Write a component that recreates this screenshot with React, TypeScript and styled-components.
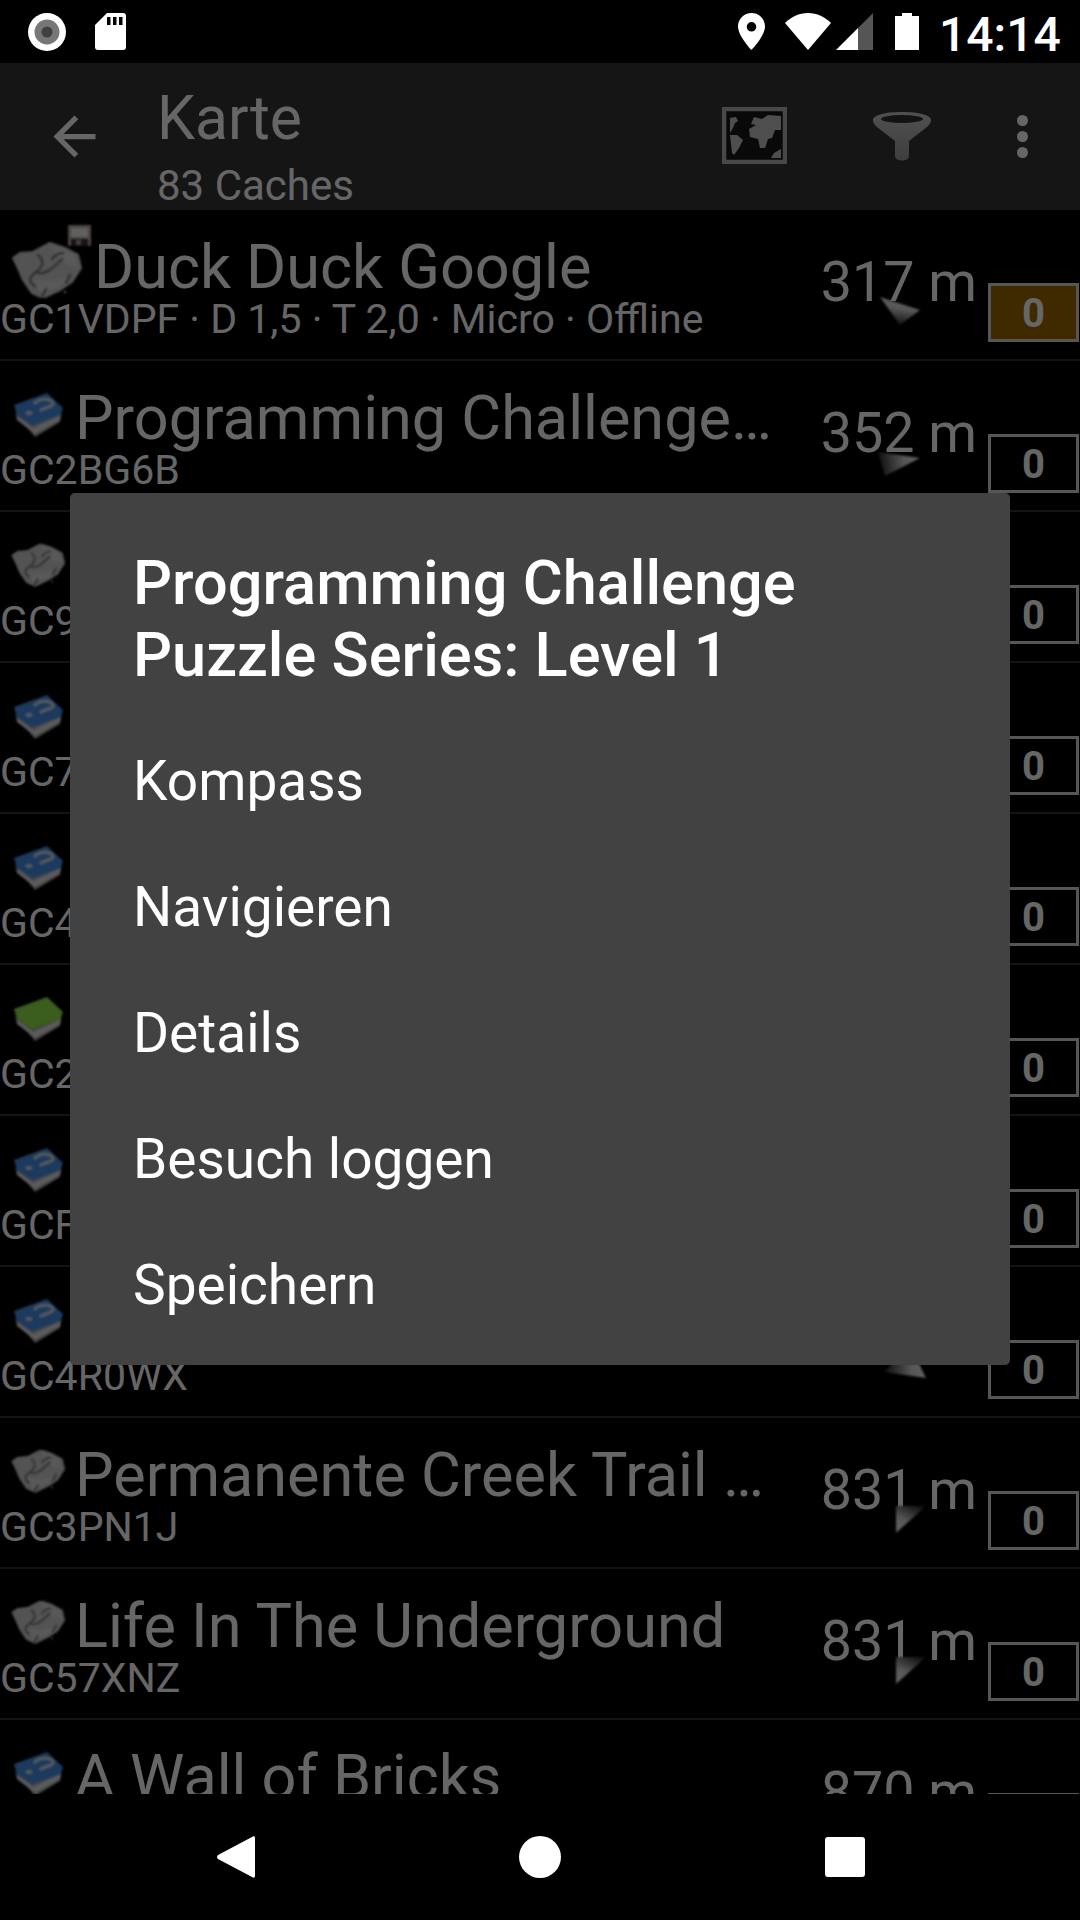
import React from 'react'
import styled, { createGlobalStyle } from 'styled-components'

const GlobalStyle = createGlobalStyle`
  html, body {
    margin: 0;
    padding: 0;
    background: #000;
    font-family: Roboto, "Liberation Sans", sans-serif;
  }
`

const Screen = styled.div`
  width: 1080px;
  height: 1920px;
  display: flex;
  flex-direction: column;
  overflow: hidden;
  background: #000;
`

const StatusBar = styled.div`
  height: 63px;
  flex: none;
  display: flex;
  align-items: center;
  padding: 0 22px 0 28px;
  color: #fff;
`

const StatusLeft = styled.div`
  display: flex;
  align-items: center;
  gap: 29px;
  flex: 1;
`

const StatusRight = styled.div`
  display: flex;
  align-items: center;
`

const StatusIcon = styled.svg<{ $gap?: number }>`
  display: block;
  margin-right: ${({ $gap }) => $gap ?? 0}px;
`

const Clock = styled.span`
  font-size: 48px;
  font-weight: 500;
  line-height: 63px;
  position: relative;
  top: 3px;
  width: 116px;
  margin-left: -3px;
  margin-right: 3px;
  white-space: nowrap;
`

const Dimmed = styled.div`
  position: relative;
  flex: 1;
  min-height: 0;
  display: flex;
  flex-direction: column;
`

const ActionBar = styled.div`
  height: 147px;
  flex: none;
  display: flex;
  background: #363636;
  color: #fff;
`

const BackSlot = styled.div`
  width: 112px;
  padding: 42px 0 0 43px;
  box-sizing: border-box;
  flex: none;
`

const Titles = styled.div`
  flex: 1;
  padding-left: 45px;
`

const BarTitle = styled.div`
  font-size: 60.6px;
  line-height: 68px;
  margin-top: 22px;
  color: #fff;
`

const BarSubtitle = styled.div`
  font-size: 42px;
  line-height: 46px;
  margin-top: 10px;
  color: #fff;
`

const BarActions = styled.div`
  display: flex;
  align-items: flex-start;
  padding-top: 44px;
  padding-right: 52px;
`

const MapSlot = styled.svg`
  display: block;
  margin-right: 86px;
`

const FunnelSlot = styled.svg`
  display: block;
  margin-top: 5px;
  margin-right: 86px;
`

const MoreDots = styled.div`
  display: flex;
  flex-direction: column;
  gap: 5px;
  margin-top: 8px;
`

const Dot = styled.span`
  width: 11px;
  height: 11px;
  border-radius: 50%;
  background: #fff;
`

const List = styled.div`
  flex: 1;
  min-height: 0;
  overflow: hidden;
`

const Row = styled.div`
  position: relative;
  height: 151px;
  box-sizing: border-box;
  border-bottom: 2px solid #333;
  display: flex;
  color: #fff;
`

const RowMain = styled.div`
  flex: 1;
  min-width: 0;
  padding-top: 26px;
`

const TitleLine = styled.div`
  display: flex;
  height: 62px;
`

const IconSlot = styled.div<{ $wide?: boolean }>`
  flex: none;
  width: ${({ $wide }) => ($wide ? 94 : 75)}px;
  margin-top: ${({ $wide }) => ($wide ? -11 : 6)}px;
`

const CacheTitle = styled.div`
  font-size: 61.2px;
  line-height: 60px;
  margin-top: 1px;
  white-space: nowrap;
`

const CacheInfo = styled.div`
  font-size: 41px;
  line-height: 42px;
  white-space: nowrap;
`

const Distance = styled.div`
  flex: none;
  margin-top: 42px;
  margin-right: 11px;
  font-size: 55.6px;
  line-height: 60px;
  white-space: nowrap;
`

const Badge = styled.div<{ $active?: boolean }>`
  flex: none;
  align-self: flex-start;
  width: 91px;
  height: 59px;
  margin: 73px 1px 0 0;
  padding-top: 2px;
  box-sizing: border-box;
  border: 3px solid #d8d8d8;
  background: ${({ $active }) => ($active ? '#9e6a00' : 'transparent')};
  display: flex;
  align-items: center;
  justify-content: center;
  font-size: 40px;
  font-weight: 700;
`

const ArrowBox = styled.svg`
  position: absolute;
  left: 870px;
  top: 70px;
  filter: blur(1px);
`

const Overlay = styled.div`
  position: absolute;
  inset: 0;
  background: rgba(0, 0, 0, 0.6);
  display: flex;
  align-items: center;
  justify-content: center;
`

const Dialog = styled.div`
  width: 940px;
  height: 872px;
  box-sizing: border-box;
  background: #424242;
  border-radius: 5px;
  color: #fff;
  padding: 54px 63px 0;
`

const DialogTitle = styled.div`
  font-size: 61.3px;
  font-weight: 500;
  line-height: 72px;
  margin-bottom: 27px;
`

const DialogItem = styled.div`
  height: 126px;
  font-size: 55px;
  line-height: 126px;
`

const NavBar = styled.div`
  height: 126px;
  flex: none;
  display: flex;
  align-items: center;
  gap: 264px;
  padding-left: 217px;
`

const NavCircle = styled.span`
  width: 42px;
  height: 42px;
  border-radius: 50%;
  background: #fff;
`

const NavSquare = styled.span`
  width: 40px;
  height: 40px;
  border-radius: 3px;
  background: #fff;
`

const SoftSvg = styled.svg`
  display: block;
  filter: blur(0.8px);
`

const rockOutline =
  'M13 33 L20 28 L33 27 L50 18 L65 23 L78 30 L81 43 L72 57 L60 65 L43 73 L32 68 L23 55 L18 43 Z'

const RockShape = () => (
  <>
    <path d={rockOutline} fill="#cfcfcf" stroke="#cfcfcf" strokeLinejoin="round" strokeWidth="2" />
    <path d="M50 20 L66 25 L76 32 L78 42 L68 40 L56 30 Z" fill="#dedede" />
    <path d="M32 55 L40 68 L60 62 L70 52 L50 56 Z" fill="#dedede" />
    <path
      d="M38 30 C45 36 43 42 36 47 C29 52 28 56 35 61 M52 34 C55 30 58 28 63 28 M36 47 C44 52 54 42 62 34 M42 72 L46 64 M66 58 L70 50"
      fill="none"
      stroke="#7c7c7c"
      strokeWidth="2.4"
      strokeLinecap="round"
    />
    <circle cx="65" cy="67" r="1.2" fill="#ddd" />
  </>
)

const RockIcon = () => (
  <SoftSvg width="72" height="50" viewBox="-3 18 94 65.4">
    <RockShape />
  </SoftSvg>
)

const OfflineRockIcon = () => (
  <SoftSvg width="93" height="73" viewBox="0 0 93 73">
    <RockShape />
    <rect x="68" y="0" width="23" height="21" rx="1" fill="#c4a8a8" />
    <rect x="71" y="3" width="17" height="9" fill="#f0f0f0" />
    <rect x="71" y="14" width="17" height="7" fill="#383030" />
    <rect x="76" y="15" width="5" height="5" fill="#b09a9a" />
  </SoftSvg>
)

const BoxIcon = ({ color, question }: { color: string; question?: boolean }) => (
  <SoftSvg width="72" height="50" viewBox="-14 0 72 50">
    <path d="M1 20 L21 44 L46 29 L48 16 Z" fill="#a8a8ac" />
    <path d="M2 22 L19 35 L47 22 L46 27 L21 41 L3 27 Z" fill="#e4e4e4" />
    <path d="M0 12 L33 0 L49 15 L46 22 L18 32 L3 22 Z" fill={color} />
    {question && (
      <>
        <path
          d="M21 10 C26 5 37 5 39 10 C40 14 31 14 27 17"
          fill="none"
          stroke="#d0dae8"
          strokeWidth="3.6"
          strokeLinecap="round"
        />
        <ellipse cx="15" cy="20" rx="3.6" ry="2.2" fill="#d0dae8" />
      </>
    )}
  </SoftSvg>
)

type ArrowShape = { points: string; from: [number, number]; to: [number, number] }

const DirectionArrow = ({ id, shape }: { id: string; shape: ArrowShape }) => (
  <ArrowBox width="66" height="72" viewBox="0 0 66 72">
    <defs>
      <linearGradient
        id={id}
        gradientUnits="userSpaceOnUse"
        x1={shape.from[0]}
        y1={shape.from[1]}
        x2={shape.to[0]}
        y2={shape.to[1]}
      >
        <stop offset="0" stopColor="#222" />
        <stop offset="0.7" stopColor="#d8d8d8" />
        <stop offset="1" stopColor="#e8e8e8" />
      </linearGradient>
    </defs>
    <polygon points={shape.points} fill={`url(#${id})`} />
  </ArrowBox>
)

type Cache = {
  icon: 'rock' | 'offline' | 'mystery' | 'green'
  title?: string
  info: string
  distance?: string
  arrow?: ArrowShape
  active?: boolean
}

const caches: Cache[] = [
  {
    icon: 'offline',
    title: 'Duck Duck Google',
    info: 'GC1VDPF · D 1,5 · T 2,0 · Micro · Offline',
    distance: '317 m',
    active: true,
    arrow: { points: '10,17 50,30 30,45', from: [30, 46], to: [34, 22] },
  },
  {
    icon: 'mystery',
    title: 'Programming Challenge…',
    info: 'GC2BG6B',
    distance: '352 m',
    arrow: { points: '8,21 50,27 15,45', from: [8, 32], to: [46, 28] },
  },
  { icon: 'rock', info: 'GC9' },
  { icon: 'mystery', info: 'GC7' },
  { icon: 'mystery', info: 'GC4' },
  { icon: 'green', info: 'GC2' },
  { icon: 'mystery', info: 'GCF' },
  {
    icon: 'mystery',
    info: 'GC4R0WX',
    arrow: { points: '14,35 56,41 40,8', from: [14, 34], to: [52, 40] },
  },
  {
    icon: 'rock',
    title: 'Permanente Creek Trail …',
    info: 'GC3PN1J',
    distance: '831 m',
    arrow: { points: '26,18 56,18 26,45', from: [42, 14], to: [30, 40] },
  },
  {
    icon: 'rock',
    title: 'Life In The Underground',
    info: 'GC57XNZ',
    distance: '831 m',
    arrow: { points: '26,18 56,18 26,45', from: [42, 14], to: [30, 40] },
  },
  {
    icon: 'mystery',
    title: 'A Wall of Bricks',
    info: 'GC3WALL',
    distance: '870 m',
  },
]

const CacheIcon = ({ kind }: { kind: Cache['icon'] }) => {
  if (kind === 'offline') return <OfflineRockIcon />
  if (kind === 'rock') return <RockIcon />
  if (kind === 'green') return <BoxIcon color="#94e84c" />
  return <BoxIcon color="#4690ec" question />
}

const menuItems = ['Kompass', 'Navigieren', 'Details', 'Besuch loggen', 'Speichern']

const App = () => (
  <Screen>
    <GlobalStyle />
    <StatusBar>
      <StatusLeft>
        <svg width="38" height="38" viewBox="0 0 38 38">
          <circle cx="19" cy="19" r="19" fill="#fff" />
          <circle cx="19" cy="19" r="12.5" fill="#777" />
          <circle cx="19" cy="19" r="5.5" fill="#404040" />
        </svg>
        <svg width="31" height="37" viewBox="0 0 31 37">
          <path
            d="M12 0 H28 A3 3 0 0 1 31 3 V34 A3 3 0 0 1 28 37 H3 A3 3 0 0 1 0 34 V12 Z"
            fill="#fff"
          />
          <rect x="12" y="4" width="3.5" height="8" fill="#000" />
          <rect x="18" y="4" width="3.5" height="8" fill="#000" />
          <rect x="24" y="4" width="3.5" height="8" fill="#000" />
        </svg>
      </StatusLeft>
      <StatusRight>
        <StatusIcon $gap={20} width="27" height="37" viewBox="0 0 27 37">
          <path
            fillRule="evenodd"
            d="M13.5 0 C6 0 0 6 0 13.5 C0 23 13.5 37 13.5 37 C13.5 37 27 23 27 13.5 C27 6 21 0 13.5 0 Z M13.5 9 A4.8 4.8 0 1 1 13.5 18.6 A4.8 4.8 0 1 1 13.5 9 Z"
            fill="#fff"
          />
        </StatusIcon>
        <StatusIcon $gap={5} width="46" height="37" viewBox="0 0 46 37">
          <path d="M23 37 L0 10 C6 4 14 0 23 0 C32 0 40 4 46 10 Z" fill="#fff" />
        </StatusIcon>
        <StatusIcon $gap={22} width="37" height="37" viewBox="0 0 37 37">
          <path d="M0 37 L22 15 V37 Z" fill="#fff" />
          <path d="M22 15 L37 0 V37 H22 Z" fill="#555" />
        </StatusIcon>
        <StatusIcon $gap={23} width="24" height="37" viewBox="0 0 24 37">
          <path d="M7 0 H17 V3 H24 V37 H0 V3 H7 Z" fill="#fff" />
        </StatusIcon>
        <Clock>14:14</Clock>
      </StatusRight>
    </StatusBar>

    <Dimmed>
      <ActionBar>
        <BackSlot>
          <svg width="63" height="63" viewBox="0 0 24 24">
            <path
              d="M20 11H7.83l5.59-5.59L12 4l-8 8 8 8 1.41-1.41L7.83 13H20v-2z"
              fill="#fff"
            />
          </svg>
        </BackSlot>
        <Titles>
          <BarTitle>Karte</BarTitle>
          <BarSubtitle>83 Caches</BarSubtitle>
        </Titles>
        <BarActions>
          <MapSlot width="65" height="57" viewBox="0 0 65 57">
            <rect x="0" y="0" width="65" height="57" fill="#000" opacity="0.55" />
            <rect x="2" y="2" width="61" height="53" fill="none" stroke="#b4b4b4" strokeWidth="4.5" />
            <path d="M8 11 L14 10 L16 14 L13 16 L11 21 L8 26 Z" fill="#c4c4c4" />
            <path d="M8 28 L15 28 L21 33 L17 41 L12 48 L10 46 L9 37 Z" fill="#c4c4c4" />
            <path
              d="M29 17 L32 10 L40 12 L46 8 L59 9 L59 23 L53 23 L50 31 L46 32 L43 41 L38 41 L36 32 L28 30 L27 22 L34 18 Z"
              fill="#c4c4c4"
            />
            <path d="M49 51 L52 46 L59 42 L59 51 Z" fill="#c4c4c4" />
          </MapSlot>
          <FunnelSlot width="58" height="49" viewBox="0 0 58 49">
            <defs>
              <linearGradient id="funnelFill" x1="0" y1="0" x2="0" y2="1">
                <stop offset="0" stopColor="#c8c8c8" />
                <stop offset="1" stopColor="#9c9c9c" />
              </linearGradient>
            </defs>
            <path
              d="M0 8 C0 3 12 0 29 0 C46 0 58 3 58 8 C58 11 56 13 54 15 L36 29 V44 C36 50 22 50 22 44 V29 L4 15 C2 13 0 11 0 8 Z"
              fill="url(#funnelFill)"
            />
            <ellipse cx="29" cy="7" rx="21" ry="4" fill="#303030" />
          </FunnelSlot>
          <MoreDots>
            <Dot />
            <Dot />
            <Dot />
          </MoreDots>
        </BarActions>
      </ActionBar>

      <List>
        {caches.map((cache, i) => (
          <Row key={i}>
            <RowMain>
              <TitleLine>
                <IconSlot $wide={cache.icon === 'offline'}>
                  <CacheIcon kind={cache.icon} />
                </IconSlot>
                <CacheTitle>{cache.title}</CacheTitle>
              </TitleLine>
              <CacheInfo>{cache.info}</CacheInfo>
            </RowMain>
            <Distance>{cache.distance}</Distance>
            <Badge $active={cache.active}>0</Badge>
            {cache.arrow && <DirectionArrow id={`arrow${i}`} shape={cache.arrow} />}
          </Row>
        ))}
      </List>

      <Overlay>
        <Dialog>
          <DialogTitle>
            Programming Challenge
            <br />
            Puzzle Series: Level 1
          </DialogTitle>
          {menuItems.map(item => (
            <DialogItem key={item}>{item}</DialogItem>
          ))}
        </Dialog>
      </Overlay>
    </Dimmed>

    <NavBar>
      <svg width="38" height="42" viewBox="0 0 38 42">
        <path d="M38 2 V40 C38 42 36 42 35 41 L1 23 C-0.3 22 -0.3 20 1 19 L35 1 C36 0 38 0 38 2 Z" fill="#fff" />
      </svg>
      <NavCircle />
      <NavSquare />
    </NavBar>
  </Screen>
)

export default App
